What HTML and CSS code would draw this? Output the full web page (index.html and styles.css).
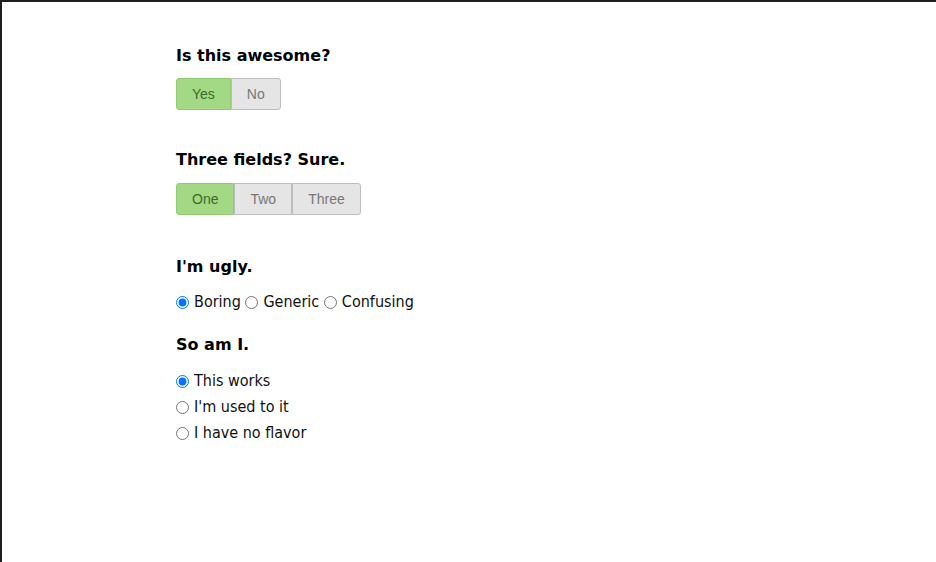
FILE: index.html
```html
<!DOCTYPE html>
<html>
<head>
<meta charset="utf-8">
<link rel="stylesheet" href="styles.css">
</head>
<body>
<div class="frame">
  <div class="content">
    <section class="group">
      <h3 class="title tight">Is this awesome?</h3>
      <div class="switch">
        <span class="opt on">Yes</span><span class="opt">No</span>
      </div>
    </section>
    <section class="group">
      <h3 class="title">Three fields? Sure.</h3>
      <div class="switch">
        <span class="opt on">One</span><span class="opt">Two</span><span class="opt">Three</span>
      </div>
    </section>
    <section class="group plain">
      <h3 class="title tight">I'm ugly.</h3>
      <div class="inline-radios">
        <label class="radio"><input type="radio" name="u" checked>Boring</label>
        <label class="radio"><input type="radio" name="u">Generic</label>
        <label class="radio"><input type="radio" name="u">Confusing</label>
      </div>
    </section>
    <section class="group plain">
      <h3 class="title">So am I.</h3>
      <div class="stack-radios">
        <label class="radio"><input type="radio" name="s" checked>This works</label>
        <label class="radio"><input type="radio" name="s">I'm used to it</label>
        <label class="radio"><input type="radio" name="s">I have no flavor</label>
      </div>
    </section>
  </div>
</div>
</body>
</html>
```
FILE: styles.css
```css
html, body {
  margin: 0;
  padding: 0;
  background: #fff;
}
.frame {
  box-sizing: border-box;
  width: 936px;
  height: 562px;
  border-top: 2px solid #1e1e1e;
  border-left: 2px solid #1e1e1e;
  overflow: hidden;
}
.content {
  padding: 44px 0 0 174px;
  font-family: "DejaVu Sans Condensed", "DejaVu Sans", sans-serif;
  font-size: 16px;
  color: #111;
}
.group {
  margin-bottom: 40px;
}
.group + .group {
  margin-bottom: 42px;
}
.group.plain {
  margin-bottom: 20px;
}
.title {
  margin: 0 0 13px 0;
  font-family: "DejaVu Sans", sans-serif;
  font-weight: bold;
  font-size: 16px;
  line-height: 20px;
  color: #000;
}
.title.tight {
  margin-bottom: 12px;
}
.switch {
  display: flex;
}
.opt {
  display: block;
  box-sizing: border-box;
  height: 32px;
  line-height: 30px;
  padding: 0 15px;
  border: 1px solid #bdbdbd;
  background: #e5e5e5;
  color: #777;
  font-family: "Liberation Sans", Arial, sans-serif;
  font-size: 14px;
}
.opt:first-child {
  border-radius: 3px 0 0 3px;
}
.opt:last-child {
  border-radius: 0 3px 3px 0;
}
.opt.on {
  background: #a3d985;
  border-color: #8fcb72;
  color: #3d6a2c;
}
.radio {
  display: inline-flex;
  align-items: center;
  line-height: 26px;
  color: #111;
}
.radio input {
  width: 13px;
  height: 13px;
  margin: 0 5px 0 0;
}
.stack-radios .radio {
  display: flex;
}
```
